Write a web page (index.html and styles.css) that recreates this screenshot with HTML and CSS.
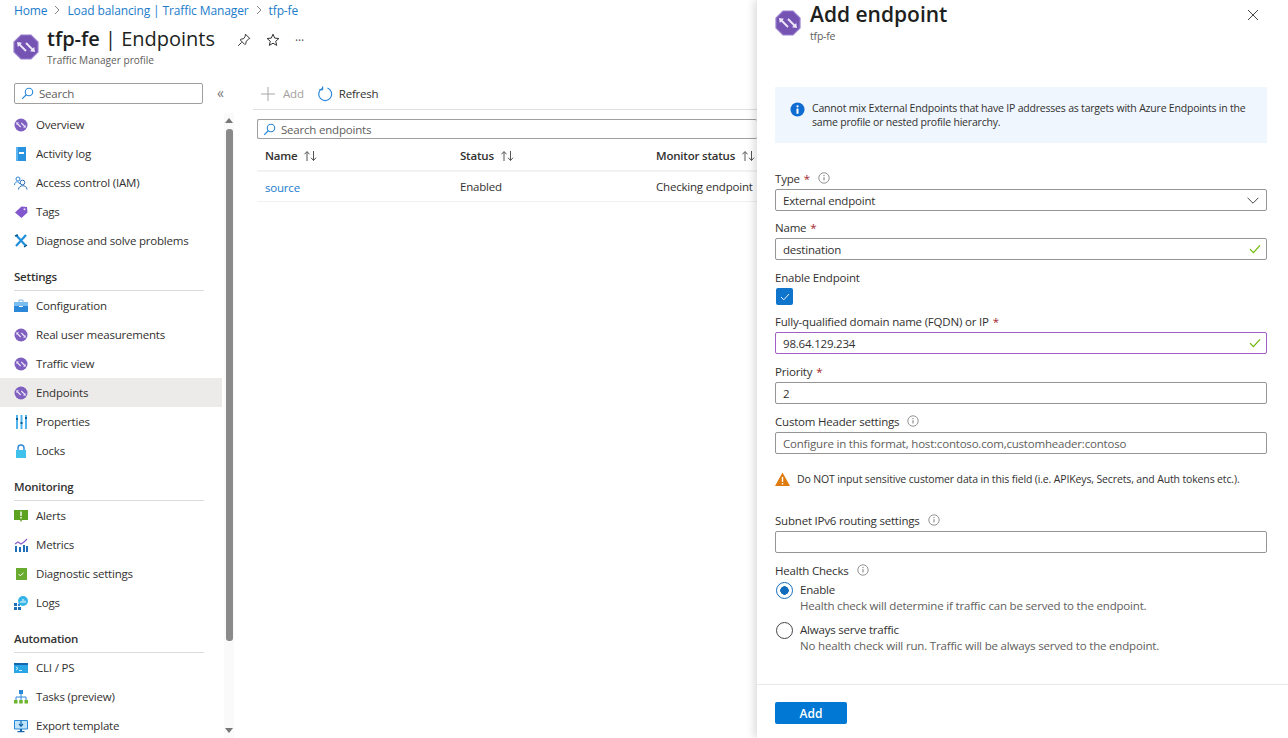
FILE: index.html
```html
<!DOCTYPE html>
<html lang="en">
<head>
    <meta charset="UTF-8">
    <title>tfp-fe | Endpoints</title>
    <link rel="stylesheet" href="styles.css">
</head>
<body>
    <!-- Shared icons -->
    <svg class="defs" xmlns="http://www.w3.org/2000/svg">
        <symbol id="tm" viewBox="0 0 26 26">
            <path d="M8 1h10l7 7v10l-7 7H8l-7-7V8z" fill="#7453b2" stroke="#9a80cf" stroke-width="1.2"/>
            <path d="M6 10l7 7M13 9l7 7" stroke="#ece6f8" stroke-width="1.900" fill="none"/>
            <path d="M4 8l5 .8L4.800 13zM22 18l-5-.8 4.200-4.200z" fill="#ece6f8"/>
        </symbol>
        <symbol id="tm-small" viewBox="0 0 14 14">
            <circle cx="7" cy="7" r="6.500" fill="#7f5fc0"/>
            <path d="M3.200 5.500l3.500 3.500M7.300 5l3.500 3.500" stroke="#ece6f8" stroke-width="1.100" fill="none"/>
            <path d="M2.200 4.300l2.800.2-2.500 2.500zM11.800 9.700L9 9.500l2.500-2.500z" fill="#ece6f8"/>
        </symbol>
        <symbol id="search" viewBox="0 0 14 14">
            <circle cx="8.6" cy="5.4" r="4" fill="none" stroke="#2b88d8" stroke-width="1.2"/>
            <path d="M5.7 8.3L1.2 12.8" stroke="#2b88d8" stroke-width="1.3"/>
        </symbol>
        <symbol id="sort" viewBox="0 0 15 12">
            <path d="M4 11V2M1.5 4.3L4 1.5l2.5 2.8" fill="none" stroke="#555" stroke-width="1"/>
            <path d="M10.5 1v9.5M8 7.7l2.5 2.8L13 7.7" fill="none" stroke="#555" stroke-width="1"/>
        </symbol>
        <symbol id="info" viewBox="0 0 12 12">
            <circle cx="6" cy="6" r="5.2" fill="none" stroke="#777" stroke-width=".8"/>
            <path d="M6 5.2v3.2" stroke="#666" stroke-width=".9"/>
            <circle cx="6" cy="3.6" r=".6" fill="#666"/>
        </symbol>
        <symbol id="tick" viewBox="0 0 12 10">
            <path d="M1 5.2l3.4 3.4L11 1.4" fill="none" stroke="#6bb700" stroke-width="1.2"/>
        </symbol>
    </svg>

    <div class="page">
        <div class="main">
            <!-- Breadcrumb -->
            <nav class="crumbs">
                <a>Home</a>
                <svg class="chev" viewBox="0 0 6 10"><path d="M1 1l4 4-4 4" fill="none" stroke="#777" stroke-width=".9"/></svg>
                <a>Load balancing | Traffic Manager</a>
                <svg class="chev" viewBox="0 0 6 10"><path d="M1 1l4 4-4 4" fill="none" stroke="#777" stroke-width=".9"/></svg>
                <a>tfp-fe</a>
            </nav>

            <!-- Resource title -->
            <header class="resource">
                <svg class="resource-icon"><use href="#tm"/></svg>
                <div class="resource-text">
                    <h1><b>tfp-fe</b> | Endpoints</h1>
                    <p>Traffic Manager profile</p>
                </div>
                <div class="resource-actions">
                    <svg viewBox="0 0 14 14"><path d="M8.5 1.2l4.3 4.3-1.1.5-2.6 2.4-.2 2.3-1 .9-4.6-4.6.9-1 2.3-.2L8 3.7zM4.6 9.4L1.2 12.8" fill="none" stroke="#333" stroke-width="1"/></svg>
                    <svg viewBox="0 0 14 14"><path d="M7 1.2l1.7 3.9 4.2.4-3.2 2.8 1 4.1L7 10.2l-3.7 2.2 1-4.1L1.100 5.500l4.200-.4z" fill="none" stroke="#333" stroke-width="1"/></svg>
                    <span class="dots">···</span>
                </div>
            </header>

            <div class="columns">
                <!-- Left menu -->
                <aside class="sidebar">
                    <div class="menu">
                        <div class="menu-search-row">
                            <div class="searchbox menu-search">
                                <svg class="search-icon"><use href="#search"/></svg>
                                <span>Search</span>
                            </div>
                            <span class="collapse">«</span>
                        </div>

                        <a class="item"><svg><use href="#tm-small"/></svg>Overview</a>
                        <a class="item">
                            <svg viewBox="0 0 14 14"><path d="M2 1a1 1 0 0 1 1-1h9v14H3a1 1 0 0 1-1-1z" fill="#2a93e0"/><path d="M2 0h2v14H2z" fill="#5db4ee"/><path d="M5 5h5v2H5z" fill="#fff"/></svg>
                            Activity log
                        </a>
                        <a class="item">
                            <svg viewBox="0 0 14 14"><circle cx="4" cy="3" r="2" fill="none" stroke="#2b88d8"/><path d="M.5 9c0-4 5-4 5-1" fill="none" stroke="#2b88d8"/><circle cx="8.500" cy="6.500" r="2.300" fill="none" stroke="#2b6fb8"/><path d="M4.500 13.500c0-5 8.500-5 8.500 0" fill="none" stroke="#2b6fb8"/></svg>
                            Access control (IAM)
                        </a>
                        <a class="item">
                            <svg viewBox="0 0 14 14"><path d="M1 7.500L7.500 1.500 13 2l.5 5.500L7.500 13z" fill="#8256cc"/><circle cx="10.500" cy="4.300" r="1" fill="#e6def5"/></svg>
                            Tags
                        </a>
                        <a class="item">
                            <svg viewBox="0 0 14 14"><path d="M2 1l10 11M12 1L2 12" stroke="#1f8fdc" stroke-width="2.200"/><path d="M1 2l3-1M10 13l3-2" stroke="#0b5a8c" stroke-width="1.500"/></svg>
                            Diagnose and solve problems
                        </a>

                        <h2 class="group">Settings</h2>
                        <a class="item">
                            <svg viewBox="0 0 14 14"><path d="M5 3V1h4v2" fill="none" stroke="#7fb6e6"/><path d="M0 3h14v10H0z" fill="#2b88d8"/><path d="M0 3h14v4H0z" fill="#79bdf0"/><path d="M5 7h4v1H5z" fill="#fff"/></svg>
                            Configuration
                        </a>
                        <a class="item"><svg><use href="#tm-small"/></svg>Real user measurements</a>
                        <a class="item"><svg><use href="#tm-small"/></svg>Traffic view</a>
                        <a class="item active"><svg><use href="#tm-small"/></svg>Endpoints</a>
                        <a class="item">
                            <svg viewBox="0 0 14 14"><path d="M2 0h2v14H2zM6.500 0h2v14h-2zM11 0h2v14h-2z" fill="#4fb3ee"/><path d="M2 3h2v2H2zM6.500 7h2v2h-2zM11 2h2v2h-2z" fill="#0b5a8c"/></svg>
                            Properties
                        </a>
                        <a class="item">
                            <svg viewBox="0 0 14 14"><path d="M4 6V4a3 3 0 0 1 6 0v2" fill="none" stroke="#2b88d8" stroke-width="1.400"/><path d="M2 6h10v8H2z" fill="#3fc1ec"/></svg>
                            Locks
                        </a>

                        <h2 class="group">Monitoring</h2>
                        <a class="item">
                            <svg viewBox="0 0 14 14"><path d="M0 1h14v10H8l-1 2-1-2H0z" fill="#5ea31f"/><path d="M6.300 2.500h1.400v4.500H6.300zM6.300 8h1.400v1.400H6.300z" fill="#fff"/></svg>
                            Alerts
                        </a>
                        <a class="item">
                            <svg viewBox="0 0 14 14"><path d="M1 8h2v6H1zM5 9h2v5H5zM9 7h2v7H9zM12 8h2v6h-2z" fill="#1f6fb8"/><path d="M1 6l3-2 3 2 3-2 3-3" fill="none" stroke="#8a5cc9" stroke-width="1.200"/></svg>
                            Metrics
                        </a>
                        <a class="item">
                            <svg viewBox="0 0 14 14"><path d="M2 1h11v12H2z" fill="#69ab2f"/><path d="M4.500 7.500l2 1 3-2.500" fill="none" stroke="#fff"/></svg>
                            Diagnostic settings
                        </a>
                        <a class="item">
                            <svg viewBox="0 0 14 14"><circle cx="9" cy="5" r="5" fill="#35b4e8"/><path d="M7 7V5M9 7V3M11 7V4.500" stroke="#fff"/><path d="M0 7h3v3H0zM0 11h3v3H0zM4 11h3v3H4z" fill="#1f6fb8"/><path d="M4 8h2v2H4z" fill="#2b88d8"/></svg>
                            Logs
                        </a>

                        <h2 class="group">Automation</h2>
                        <a class="item">
                            <svg viewBox="0 0 14 14"><path d="M0 2h14v10H0z" fill="#2aa6e6"/><path d="M0 2h14v2H0z" fill="#1467ad"/><path d="M2 6l2 1.500L2 9M5 9.500h3" fill="none" stroke="#fff" stroke-width=".8"/></svg>
                            CLI / PS
                        </a>
                        <a class="item">
                            <svg viewBox="0 0 14 14"><path d="M5 0h4v4H5z" fill="#2b88d8"/><path d="M7 4v3M2 10V7h10v3M7 7v3" fill="none" stroke="#2b88d8"/><path d="M0 10h3.500v3.500H0zM5.200 10h3.500v3.500H5.200zM10.500 10H14v3.500h-3.500z" fill="#6cb52d"/></svg>
                            Tasks (preview)
                        </a>
                        <a class="item">
                            <svg viewBox="0 0 14 14"><path d="M.5 1.500h13v8.500H.5z" fill="#bfe3f8" stroke="#2b88d8"/><path d="M7 2v5M5 5l2 2.300L9 5" fill="none" stroke="#1467ad" stroke-width="1.200"/><path d="M6 10h2v2H6zM3.500 12h7v1.200h-7z" fill="#1467ad"/></svg>
                            Export template
                        </a>
                    </div>

                    <!-- Menu scrollbar -->
                    <div class="scrollbar">
                        <span class="arrow-up"></span>
                        <span class="thumb"></span>
                        <span class="arrow-down"></span>
                    </div>
                </aside>

                <!-- Endpoint list -->
                <section class="content">
                    <div class="toolbar">
                        <span class="tool disabled">
                            <svg viewBox="0 0 14 14"><path d="M7 0v14M0 7h14" stroke="#a6a6a6"/></svg>
                            Add
                        </span>
                        <span class="tool">
                            <svg viewBox="0 0 16 16"><path d="M5 2.400a6.500 6.500 0 1 0 5.500-.4" fill="none" stroke="#2b88d8" stroke-width="1.200"/><path d="M5.600 .4v3.200H2.400" fill="none" stroke="#2b88d8" stroke-width="1.200"/></svg>
                            Refresh
                        </span>
                    </div>
                    <div class="searchbox list-search">
                        <svg class="search-icon"><use href="#search"/></svg>
                        <span>Search endpoints</span>
                    </div>
                    <div class="row head">
                        <span class="col-name">Name <svg class="sort"><use href="#sort"/></svg></span>
                        <span class="col-status">Status <svg class="sort"><use href="#sort"/></svg></span>
                        <span class="col-monitor">Monitor status <svg class="sort"><use href="#sort"/></svg></span>
                    </div>
                    <div class="row">
                        <a class="col-name link">source</a>
                        <span class="col-status">Enabled</span>
                        <span class="col-monitor">Checking endpoint</span>
                    </div>
                </section>
            </div>
        </div>

        <!-- Add endpoint blade -->
        <aside class="panel">
            <header class="panel-head">
                <svg class="panel-icon"><use href="#tm"/></svg>
                <div class="panel-title">
                    <h2>Add endpoint</h2>
                    <p>tfp-fe</p>
                </div>
                <svg class="close" viewBox="0 0 12 12"><path d="M1 1l10 10M11 1L1 11" stroke="#444" stroke-width="1"/></svg>
            </header>

            <div class="panel-body">
                <div class="notice">
                    <svg viewBox="0 0 16 16"><circle cx="8" cy="8" r="7.500" fill="#0f6cd0"/><path d="M6.900 7h2.200v5.500H6.900z" fill="#fff"/><circle cx="8" cy="4.600" r="1.200" fill="#fff"/></svg>
                    <p>Cannot mix External Endpoints that have IP addresses as targets with Azure Endpoints in the same profile or nested profile hierarchy.</p>
                </div>

                <div class="field type-field">
                    <label>Type <i>*</i> <svg class="hint"><use href="#info"/></svg></label>
                    <div class="input">External endpoint
                        <svg class="caret" viewBox="0 0 12 7"><path d="M.6 .8L6 6.200 11.400 .8" fill="none" stroke="#333" stroke-width=".9"/></svg>
                    </div>
                </div>
                <div class="field">
                    <label>Name <i>*</i></label>
                    <div class="input">destination<svg class="ok"><use href="#tick"/></svg></div>
                </div>
                <div class="field enable-field">
                    <label>Enable Endpoint</label>
                    <span class="checkbox">
                        <svg viewBox="0 0 10 8"><path d="M1 4l2.800 2.800L9 1" fill="none" stroke="#fff" stroke-width=".9"/></svg>
                    </span>
                </div>
                <div class="field">
                    <label>Fully-qualified domain name (FQDN) or IP <i>*</i></label>
                    <div class="input focused">98.64.129.234<svg class="ok"><use href="#tick"/></svg></div>
                </div>
                <div class="field">
                    <label>Priority <i>*</i></label>
                    <div class="input">2</div>
                </div>
                <div class="field">
                    <label>Custom Header settings <svg class="hint"><use href="#info"/></svg></label>
                    <div class="input placeholder">Configure in this format, host:contoso.com,customheader:contoso</div>
                </div>
                <div class="warning">
                    <svg viewBox="0 0 15 14"><path d="M7.500 .5L15 14H0z" fill="#e07b0f"/><path d="M6.800 5h1.400v5H6.800zM6.800 11h1.400v1.400H6.800z" fill="#fff"/></svg>
                    Do NOT input sensitive customer data in this field (i.e. APIKeys, Secrets, and Auth tokens etc.).
                </div>
                <div class="field">
                    <label>Subnet IPv6 routing settings <svg class="hint"><use href="#info"/></svg></label>
                    <div class="input"></div>
                </div>
                <div class="field health-field">
                    <label>Health Checks <svg class="hint"><use href="#info"/></svg></label>
                    <div class="radio-row">
                        <span class="radio on"></span>
                        <div>
                            <div class="radio-label">Enable</div>
                            <div class="radio-desc">Health check will determine if traffic can be served to the endpoint.</div>
                        </div>
                    </div>
                    <div class="radio-row">
                        <span class="radio"></span>
                        <div>
                            <div class="radio-label">Always serve traffic</div>
                            <div class="radio-desc">No health check will run. Traffic will be always served to the endpoint.</div>
                        </div>
                    </div>
                </div>
            </div>

            <footer class="panel-foot">
                <button class="primary">Add</button>
            </footer>
        </aside>
    </div>
</body>
</html>
```

FILE: styles.css
```css
/* Page frame */
html, body {
    margin: 0;
    height: 100%;
    overflow: hidden;
}

body {
    font-family: "Open Sans", "Noto Sans", sans-serif;
    font-size: 11.5px;
    letter-spacing: -0.2px;
    color: #323130;
    background: #fff;
}

.defs {
    display: none;
}

.page {
    display: flex;
    height: 738px;
}

.main {
    width: 757px;
    flex: none;
    overflow: hidden;
}

/* Breadcrumb */
.crumbs {
    display: flex;
    align-items: center;
    gap: 7px;
    height: 20px;
    padding-left: 14px;
    font-size: 12px;
    letter-spacing: -0.12px;
    color: #1b7ccb;
}

.chev {
    width: 6px;
    height: 10px;
}

/* Resource title */
.resource {
    display: flex;
    height: 52px;
}

.resource-icon {
    width: 26px;
    height: 26px;
    margin: 14px 8px 0 13px;
}

.resource-text h1 {
    margin: 4px 0 0;
    font-size: 20px;
    font-weight: 400;
    line-height: 30px;
    letter-spacing: 0;
    color: #201f1e;
}

.resource-text h1 b {
    font-weight: 600;
}

.resource-text p {
    margin: 0;
    font-size: 10.1px;
    line-height: 13px;
    letter-spacing: 0;
    color: #605e5c;
}

.resource-actions {
    display: flex;
    align-items: center;
    gap: 15px;
    height: 20px;
    margin: 10px 0 0 22px;
}

.resource-actions svg {
    width: 14px;
    height: 14px;
}

.dots {
    font-size: 12px;
    color: #555;
}

.columns {
    display: flex;
}

/* Left menu */
.sidebar {
    display: flex;
    width: 234px;
    height: 666px;
    flex: none;
    overflow: hidden;
}

.menu {
    width: 222px;
    flex: none;
}

.menu-search-row {
    display: flex;
    align-items: center;
    height: 22px;
    margin: 10px 0 6px 14px;
}

.collapse {
    margin-left: 14px;
    font-size: 14px;
    line-height: 20px;
    color: #777;
}

.searchbox {
    display: flex;
    align-items: center;
    gap: 5px;
    box-sizing: border-box;
    border: 1px solid #a19f9d;
    border-radius: 2px;
    color: #605e5c;
}

.menu-search {
    width: 189px;
    height: 21px;
    padding-left: 6px;
    flex: none;
}

.search-icon {
    width: 13px;
    height: 13px;
    flex: none;
}

.item {
    display: flex;
    align-items: center;
    gap: 8px;
    height: 29px;
    padding-left: 14px;
}

.item svg {
    width: 14px;
    height: 14px;
    flex: none;
}

.item.active {
    background: #edebe9;
}

.group {
    box-sizing: border-box;
    height: 36px;
    margin: 0 18px 0 14px;
    padding-top: 13px;
    border-bottom: 1px solid #dcdcdc;
    font-size: 11.5px;
    font-weight: 600;
    line-height: 17px;
}

/* Scrollbar */
.scrollbar {
    display: flex;
    flex-direction: column;
    align-items: center;
    width: 10px;
    margin: 41px 0 0 2px;
    padding-top: 5px;
    background: #fafafa;
}

.thumb {
    width: 7px;
    height: 512px;
    margin-top: 6px;
    border-radius: 3px;
    background: #8a8a8a;
}

.arrow-up {
    border: 4px solid transparent;
    border-top: 0;
    border-bottom: 5px solid #777;
}

.arrow-down {
    margin-top: 87px;
    border: 4px solid transparent;
    border-bottom: 0;
    border-top: 5px solid #777;
}

/* Endpoint list */
.content {
    flex: 1;
    min-width: 0;
    margin-left: 19px;
}

.toolbar {
    display: flex;
    align-items: center;
    gap: 13px;
    height: 31px;
    padding: 6px 0 0 8px;
    border-bottom: 1px solid #e1dfdd;
}

.tool {
    display: flex;
    align-items: center;
    gap: 8px;
}

.tool svg {
    width: 14px;
    height: 14px;
}

.tool:last-child {
    gap: 6px;
}

.tool:last-child svg {
    width: 16px;
    height: 16px;
}

.tool.disabled {
    color: #a19f9d;
}

.list-search {
    height: 20px;
    margin: 9px 0 0 4px;
    padding-left: 5px;
    border-right: 0;
}

.row {
    display: grid;
    grid-template-columns: 195px 196px 1fr;
    align-items: center;
    height: 29px;
    margin-left: 4px;
    padding-left: 8px;
    border-bottom: 1px solid #f0f0f0;
    white-space: nowrap;
}

.row.head {
    height: 30px;
    padding-top: 1px;
    font-weight: 600;
    border-bottom: 2px solid #f3f2f1;
}

.sort {
    width: 15px;
    height: 12px;
    margin-left: 3px;
    vertical-align: -2px;
}

.link {
    margin-top: 2px;
    color: #1b7ccb;
}

/* Add endpoint blade */
.panel {
    display: flex;
    flex-direction: column;
    flex: 1;
    min-width: 0;
    box-shadow: -3px 0 8px rgba(0, 0, 0, 0.14);
    background: #fff;
}

.panel-head {
    display: flex;
    height: 87px;
    box-sizing: border-box;
    padding: 0 26px 0 18px;
}

.panel-icon {
    width: 26px;
    height: 26px;
    margin: 10px 9px 0 0;
    flex: none;
}

.panel-title {
    flex: 1;
}

.panel-title h2 {
    margin: 0;
    font-size: 21px;
    font-weight: 600;
    line-height: 29px;
    letter-spacing: 0;
    color: #201f1e;
}

.panel-title p {
    margin: 0;
    font-size: 10.5px;
    line-height: 14px;
    color: #605e5c;
}

.close {
    width: 12px;
    height: 12px;
    margin: 9px 3px 0 0;
}

.panel-body {
    flex: 1;
    padding: 0 21px 0 18px;
}

.notice {
    display: flex;
    gap: 7px;
    box-sizing: border-box;
    height: 56px;
    margin-bottom: 26px;
    padding: 15px 10px 0 15px;
    background: #eff6fe;
}

.notice svg {
    width: 15px;
    height: 15px;
    flex: none;
}

.notice p {
    margin: 0;
    font-size: 10.5px;
    line-height: 13.500px;
}

/* Form fields */
.field {
    margin-bottom: 8px;
}

.type-field,
.enable-field {
    margin-bottom: 7px;
}

.field label {
    display: flex;
    align-items: center;
    gap: 4px;
    height: 18px;
}

.field label i {
    font-style: normal;
    color: #a4262c;
}

.hint {
    width: 12px;
    height: 12px;
    margin-left: 4px;
}

.input {
    display: flex;
    align-items: center;
    justify-content: space-between;
    box-sizing: border-box;
    height: 22px;
    margin-top: 2px;
    padding: 0 5px 0 7px;
    border: 1px solid #979593;
    border-radius: 2px;
}

.input.focused {
    border-color: #a05fc4;
}

.input.placeholder {
    color: #605e5c;
}

.ok {
    width: 12px;
    height: 10px;
}

.caret {
    width: 12px;
    height: 7px;
    margin-right: 2px;
}

.checkbox {
    display: flex;
    align-items: center;
    justify-content: center;
    width: 17px;
    height: 17px;
    margin: 2px 0 0 1px;
    border-radius: 2px;
    background: #0f74cc;
}

.checkbox svg {
    width: 10px;
    height: 8px;
}

.warning {
    display: flex;
    align-items: center;
    gap: 7px;
    height: 18px;
    margin: 16px 0 23px;
    font-size: 10.5px;
    letter-spacing: -0.14px;
    white-space: nowrap;
}

.warning svg {
    width: 15px;
    height: 14px;
    flex: none;
}

/* Health check radios */
.health-field label {
    margin-bottom: 2px;
}

.radio-row {
    display: flex;
    gap: 7px;
    margin-bottom: 7px;
}

.radio {
    box-sizing: border-box;
    width: 17px;
    height: 17px;
    margin: 1px 0 0 1px;
    border: 1px solid #444;
    border-radius: 50%;
    flex: none;
}

.radio.on {
    border-color: #0f6cbd;
    background: radial-gradient(circle, #0f6cbd 0 4px, #fff 4.500px);
}

.radio-label {
    line-height: 17px;
}

.radio-desc {
    font-size: 11.500px;
    line-height: 16px;
    letter-spacing: -0.18px;
    color: #605e5c;
}

/* Blade footer */
.panel-foot {
    box-sizing: border-box;
    height: 54px;
    padding: 17px 0 0 18px;
    border-top: 1px solid #e8e8e8;
}

.primary {
    display: block;
    width: 72px;
    height: 22px;
    border: 0;
    border-radius: 2px;
    background: #0078d4;
    color: #fff;
    font: 600 12px "Open Sans", sans-serif;
}
```
